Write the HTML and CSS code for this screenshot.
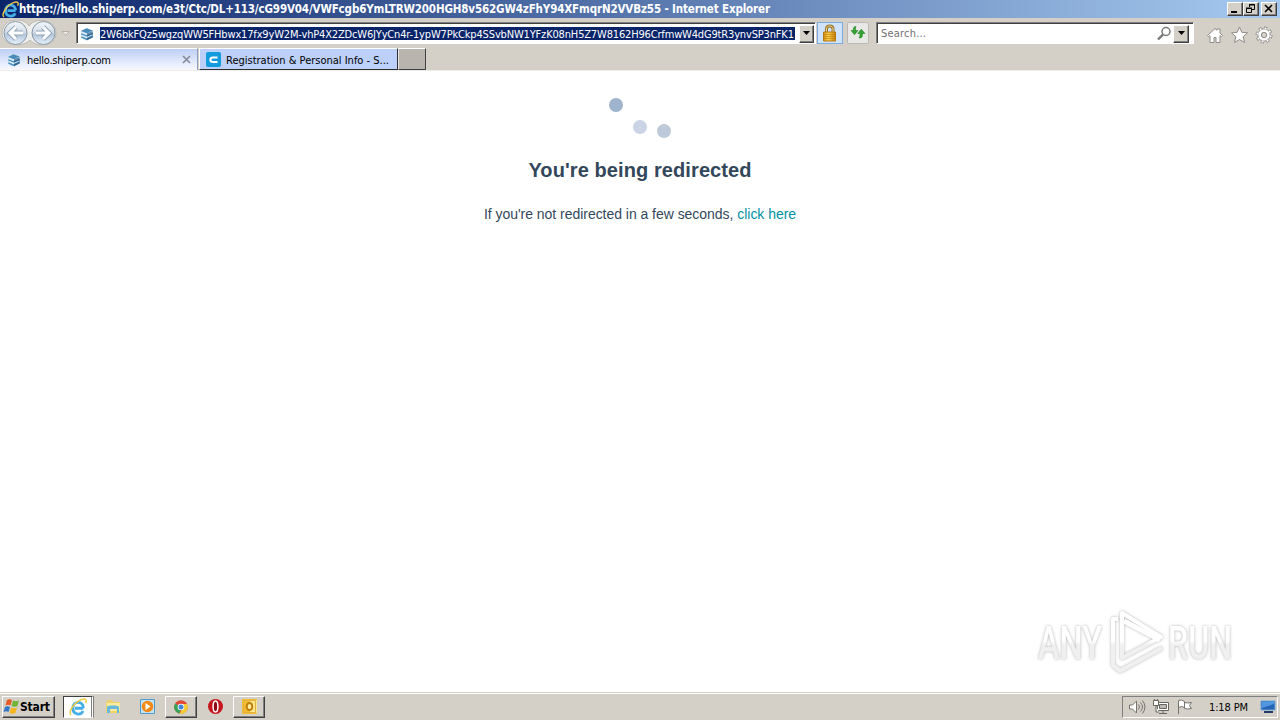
FILE: index.html
```html
<!DOCTYPE html>
<html lang="en">
<head>
<meta charset="utf-8">
<title>hello.shiperp.com - Internet Explorer</title>
<link rel="stylesheet" href="styles.css">
</head>
<body>
<svg width="0" height="0" class="defs">
  <defs>
    <linearGradient id="orb" x1="0" y1="0" x2="0" y2="1"><stop offset="0" stop-color="#f4f7fa"/><stop offset=".48" stop-color="#d3dde8"/><stop offset=".55" stop-color="#b3c6da"/><stop offset="1" stop-color="#e6f2fa"/></linearGradient>
    <linearGradient id="gold" x1="0" y1="0" x2="1" y2="0"><stop offset="0" stop-color="#d48c10"/><stop offset=".4" stop-color="#fad24c"/><stop offset="1" stop-color="#cc8208"/></linearGradient>
    <linearGradient id="mark" gradientUnits="userSpaceOnUse" x1="0" y1="10" x2="0" y2="70"><stop offset=".5" stop-color="#fff"/><stop offset=".56" stop-color="#ececec"/></linearGradient>
    <symbol id="ie" viewBox="0 0 16 16">
      <path d="M12.8 9.1H5.2M12.7 8.8C12.8 2.3 3.5 2.2 3.4 9c-.1 6 7.2 6.9 9 2.6" fill="none" stroke="#45aee6" stroke-width="2.5"/>
      <path d="M2 15C-1.5 13.200 4.500 3.500 11.500 1.300c3.500-1.100 4.500.600 3.200 3.200" fill="none" stroke="#f1cb42" stroke-width="1.300"/>
    </symbol>
    <symbol id="stack" viewBox="0 0 16 16">
      <path d="M1 4.500 8 1l7 3-.5 8L7 15.500l-6-3z" fill="#d5e9f5"/>
      <path d="m1 4.500 6.500-3 7 2.600L8 7zM1.500 7l6 2.400L14.500 6.500v2L7.800 11.500 1.500 9zM1.500 10.500 8 13l6.500-3v1.800L8 15l-6.500-2.800z" fill="#4a8cb8"/>
      <path d="M8 7v8l6.500-3V4.500z" fill="#174f7f" opacity=".6"/><path d="m2 9.400 6 2.300 5.500-2.500" stroke="#d9f0ff" fill="none"/>
    </symbol>
  </defs>
</svg>
<div class="screen">
  <header class="titlebar">
    <svg class="title-icon" width="17" height="17"><use href="#ie"/></svg>
    <svg class="title-text" width="760" height="18"><text x="0" y="13" textLength="751">https://hello.shiperp.com/e3t/Ctc/DL+113/cG99V04/VWFcgb6YmLTRW200HGH8v562GW4zFhY94XFmqrN2VVBz55 - Internet Explorer</text></svg>
    <div class="window-buttons">
      <button class="wbtn"><svg width="14" height="12"><path d="M3 8h6v2H3z"/></svg></button>
      <button class="wbtn"><svg width="14" height="12"><path d="M5.500 4V1.500h5v5H8M5 2h6M2.500 5.500h5v4h-5zM2 5h6" fill="none" stroke="#000"/></svg></button>
      <button class="wbtn close"><svg width="14" height="12"><path d="m3 2 7 7m0-7-7 7" stroke="#000" stroke-width="1.600"/></svg></button>
    </div>
  </header>

  <nav class="navbar">
    <svg class="arrows" width="74" height="29" viewBox="0 0 74 29">
      <path d="M2 15C3-1 24-1 29 8c7-10 27-6 27 7 0 14-19 15-26 7C21 31 2 27 2 15z" fill="#eeeeed" stroke="#bdbab5"/>
      <g fill="url(#orb)" stroke="#8997a6"><circle cx="15.500" cy="15" r="11.500"/><circle cx="43.500" cy="15" r="11.500"/></g>
      <g fill="none" stroke="#8fa2b7" stroke-width="5"><path d="M23 15H11m5-6-6 6 6 6M36 15h12m-5-6 6 6-6 6"/></g>
      <g fill="none" stroke="#fff" stroke-width="3"><path d="M23 15H11m5-6-6 6 6 6M36 15h12m-5-6 6 6-6 6"/></g>
      <path d="M61.500 13.500h8l-4 4z" fill="#e7e4df" stroke="#b8b2aa"/>
    </svg>
    <div class="field address">
      <svg class="site-icon" width="14" height="14"><use href="#stack"/></svg>
      <svg class="url" width="695" height="13"><text x="0" y="11" textLength="694">2W6bkFQz5wgzqWW5FHbwx17fx9yW2M-vhP4X2ZDcW6JYyCn4r-1ypW7PkCkp4SSvbNW1YFzK08nH5Z7W8162H96CrfmwW4dG9tR3ynvSP3nFK1</text></svg>
      <button class="drop"><svg width="9" height="5"><path d="M1 0h7L4.500 4z"/></svg></button>
    </div>
    <div class="tool lock"><svg width="16" height="18" viewBox="0 0 16 18"><path d="M4.500 9V5c0-4 6.500-4 6.500 0v4" fill="none" stroke="#98752c" stroke-width="3"/><path d="M4.500 9V5c0-4 6.500-4 6.500 0v4" fill="none" stroke="#f0d789"/><path d="M1.500 8h12v9h-12z" fill="url(#gold)" stroke="#b67912"/><path d="M2 10.500h11m-11 2h11m-11 2h11" stroke="#bd7908" opacity=".6"/></svg></div>
    <div class="tool refresh"><svg width="18" height="16" viewBox="0 0 18 16"><path d="M7 1.500C4.500 1.500 4.300 3 4.300 5.500H2l3.500 4.300L9 5.500H6.500c0-2 0-3 .5-4zM10 13c3.500 0 3.500-1.500 3.500-4.500H16l-3.700-4.300-3.700 4.300H11c0 2 0 3-1 4.500z" fill="#30a331" stroke="#17781d" stroke-width=".5"/></svg></div>
    <div class="field search">
      <span class="placeholder">Search...</span>
      <svg width="15" height="15"><circle cx="9" cy="5.500" r="4" fill="none" stroke="#777" stroke-width="1.500"/><path d="m6 8.500-5 5" stroke="#777" stroke-width="2.400"/></svg>
      <button class="drop"><svg width="9" height="5"><path d="M1 0h7L4.500 4z"/></svg></button>
    </div>
    <svg class="commands" width="66" height="18" viewBox="0 0 66 18" fill="#fff" stroke="#8f8b87" stroke-linejoin="round">
      <path d="m.5 9.500 7.500-7 2 1.800V3h3v4l2.500 2.500-1 1-1.500-.8v6.800H9V11.500H7v5H3V9.700l-1.500.8z"/>
      <path d="m32.500 1 2.300 5.300 5.700.500-4.300 3.900 1.300 5.800-5-3-5 3 1.300-5.800-4.300-3.900 5.700-.500z"/>
      <circle cx="57" cy="9" r="6.700" fill="none" stroke-width="3.600" stroke-dasharray="2.800 2.460"/>
      <circle cx="57" cy="9" r="6.200"/>
      <circle cx="57" cy="9" r="6.700" fill="none" stroke="#fff" stroke-width="1.800" stroke-dasharray="1.800 3.460" stroke-dashoffset="-.5"/>
      <circle cx="57" cy="9" r="2.700" fill="#d4d0c8"/>
    </svg>
  </nav>

  <div class="tabs">
    <div class="tab active"><svg class="site-icon" width="14" height="14"><use href="#stack"/></svg><svg class="tab-title" width="158" height="18"><text x="0" y="13" textLength="84">hello.shiperp.com</text></svg><svg width="9" height="9"><path d="m1 1 7 7m0-7L1 8" stroke="#858b99" stroke-width="1.700"/></svg></div>
    <div class="tab other"><svg width="16" height="16"><rect width="15" height="15" rx="2" fill="#129bdd"/><path d="M11.500 5.500H7c-3.500 0-3.500 4.500 0 4.500h4.500" fill="none" stroke="#fff" stroke-width="2"/></svg><svg class="tab-title" width="166" height="18"><text x="0" y="13" textLength="163">Registration &amp; Personal Info - S...</text></svg></div>
    <div class="tab new"></div>
  </div>

  <main class="page">
    <svg class="spinner" width="64" height="44"><circle cx="8" cy="8" r="7" fill="#9eb3cc"/><circle cx="32" cy="30" r="7" fill="#cad4e4"/><circle cx="56" cy="34" r="7" fill="#bccad9"/></svg>
    <h1>You're being redirected</h1>
    <p>If you're not redirected in a few seconds, <a>click here</a></p>
    <svg class="watermark" width="220" height="84" viewBox="0 0 220 84">
      <text x="8" y="58" textLength="64" lengthAdjust="spacingAndGlyphs">ANY</text>
      <g fill="none" stroke="url(#mark)" stroke-width="4" stroke-linejoin="round"><path d="M92 12v45l39-21zM88 18h-5v46l7 6 42-23"/><path d="M94 20l36 19" stroke-width="5"/></g>
      <text x="138" y="58" textLength="64" lengthAdjust="spacingAndGlyphs">RUN</text>
    </svg>
  </main>

  <footer class="taskbar">
    <button class="start"><svg width="17" height="17" viewBox="0 0 17 17"><path d="M4 2c2-1 3-1 5 0L7.500 7.500c-2-1-3-1-5 0z" fill="#e65b22"/><path d="M10 2.500c2 1 4 1 6 0L14.500 8c-2 1-4 1-6 0z" fill="#72b536"/><path d="M2 9c2-1 3-1 5 0l-1.500 5c-2-1-3-1-5 0z" fill="#3477c8"/><path d="M8 9.500c2 1 4 1 6 0L12.500 15c-2 1-4 1-6 0z" fill="#f4b51e"/></svg><svg width="31" height="16"><text x="0" y="12" textLength="30">Start</text></svg></button>
    <div class="task current"><svg width="18" height="18"><use href="#ie"/></svg></div>
    <div class="task folder"><svg width="17" height="17"><path d="M1 4 3 2h4l2 2h6v11H1z" fill="#eed26b"/><path d="M2 5h13v8H2z" fill="#f9e89d"/><path d="M2 15V9c0-2 12-2 12 0v6h-2v-4H5v4z" fill="#65b9dc"/></svg></div>
    <div class="task player"><svg width="17" height="17"><path d="M1.500 1.500h14v14h-14z" fill="#c3e3f7" stroke="#529acd"/><circle cx="8.500" cy="8.500" r="5.800" fill="#f48a16"/><path d="m6.500 5 5 3.500-5 3.500z" fill="#fff"/></svg></div>
    <div class="task raised"><svg width="16" height="16"><circle cx="8" cy="8" r="6.800" fill="#e34736"/><path d="M2.100 4.600 8 8l-1.500 6.700A6.800 6.800 0 0 1 2.100 4.600z" fill="#36a35b"/><path d="M8 5h6.100A6.800 6.800 0 0 1 6.500 14.700L10 8z" fill="#f4cd39"/><circle cx="8" cy="8" r="3.300" fill="#fff"/><circle cx="8" cy="8" r="2.500" fill="#4486d8"/></svg></div>
    <div class="task opera"><svg width="17" height="17"><circle cx="8.500" cy="8.500" r="7.500" fill="#c4161c"/><ellipse cx="8.500" cy="8.500" rx="2.400" ry="5.500" fill="#8f0d12" stroke="#fff" stroke-width="1.500"/></svg></div>
    <div class="task raised"><svg width="17" height="17"><path d="M1 1h15v15H1z" fill="#f2bd31"/><path d="M9 2h7v13H9z" fill="#fce68c"/><path d="M2.500 2.500h12v12h-12z" fill="none" stroke="#e0b040"/><ellipse cx="8.500" cy="8.500" rx="2.800" ry="3.600" fill="#fff0a0" stroke="#c08010" stroke-width="2"/></svg></div>
    <div class="tray">
      <svg width="18" height="16" fill="none" stroke="#77736e"><path d="M1.500 6v4h3l4 4V2l-4 4z" fill="#fff"/><path d="M10.500 5.500q2 2.500 0 5m2-7q4 4.500 0 9m2-11q5 6.500 0 13"/></svg>
      <svg width="18" height="16" fill="#fff" stroke="#69655f"><path d="M5.500 3.500h11v8h-11z"/><path d="M7.500 5.500h7v4h-7z" fill="#bdbab5"/><path d="M11 12v2m-4 .5h8M1.500 1.500h5v5h-5zM2.500 0v2m3-2v2M4 7v6h3"/></svg>
      <svg width="18" height="16" fill="#fff" stroke="#77736e"><path d="M2.500 15V1.500q3-1.500 6 1v6q-3-2-6 0M8.500 3.500q3 1 7 0l-2 3 2 3q-4 1-7 0z"/></svg>
      <svg class="clock" width="41" height="16"><text x="0" y="12" textLength="39">1:18 PM</text></svg>
      <svg class="desktop" width="17" height="15"><path d="M1 2h14v9H1z" fill="#2464b4" stroke="#73a7da"/><path d="m2 3 12-1v3L2 9z" fill="#5097df"/><path d="M4 13h9" stroke="#253c66" stroke-width="2"/></svg>
    </div>
  </footer>
</div>
</body>
</html>
```
FILE: styles.css
```css
* { box-sizing: border-box; }
body { margin: 0; overflow: hidden; font: 11px "DejaVu Sans Condensed", "DejaVu Sans", sans-serif; color: #000; }
svg { display: block; flex: none; }
.defs { position: absolute; }
button { padding: 0; margin: 0; font: inherit; border-radius: 0; }
.screen { width: 1280px; height: 720px; display: flex; flex-direction: column; background: #d4d0c8; }
.titlebar { height: 18px; flex: none; display: flex; align-items: center; padding: 0 3px 0 2px; background: linear-gradient(90deg, #0a246a, #a6caf0); }
.title-text { font-family: "DejaVu Sans Condensed", sans-serif; font-weight: bold; fill: #fff; font-size: 11.5px; }
.window-buttons { display: flex; margin-left: auto; }
.wbtn, .drop, .raised, .start { background: #d4d0c8; border: 1px solid; border-color: #fff #404040 #404040 #fff; box-shadow: inset -1px -1px #808080; }
.wbtn { width: 16px; height: 14px; }
.wbtn.close { margin-left: 2px; }
.navbar { height: 29px; flex: none; display: flex; align-items: flex-start; }
.arrows { margin-right: 2px; }
.field { background: #fff; height: 22px; margin-top: 4px; border: 1px solid; border-color: #808080 #fff #fff #808080; box-shadow: inset 1px 1px #404040; display: flex; align-items: center; }
.address { width: 740px; padding: 1px 1px 0 3px; }
.url { background: #0a246a; fill: #fff; font-family: "DejaVu Sans Condensed", sans-serif; font-size: 11px; margin: 0 4px 0 6px; }
.drop { width: 16px; height: 18px; display: flex; align-items: center; justify-content: center; }
.tool { height: 22px; margin-top: 4px; display: flex; align-items: center; justify-content: center; }
.lock { width: 26px; background: #cfe3fb; border: 1px solid #7eacdf; margin-left: 1px; }
.refresh { width: 22px; background: #e8e8e6; border: 1px solid #bcb9b4; border-radius: 2px; margin: 4px 7px 0 4px; }
.search { width: 318px; padding: 1px 4px 0 4px; }
.search .drop { margin-left: 1px; width: 16px; }
.placeholder { color: #707070; flex: 1; font-size: 11px; letter-spacing: .2px; }
.commands { margin: 8px 0 0 13px; }
.tabs { height: 24px; flex: none; display: flex; padding-top: 1px; border-bottom: 1px solid #eeedeb; }
.tab { height: 22px; display: flex; align-items: center; }
.tab text { font-size: 11px; }
.active { width: 198px; padding-left: 7px; background: linear-gradient(#bdcff7, #eaf0fc 75%, #f5f7fc); border-top: 1px solid #fff; border-right: 1px solid #8e9cc0; }
.active .tab-title { margin-left: 6px; margin-right: -3px; }
.other { width: 199px; padding: 1px 0 0 6px; background: #bcd0fa; border: 1px solid #fff; border-width: 1px 0 0 1px; border-right: 1px solid #303030; border-bottom: 1px solid #303030; margin-left: 1px; }
.other .tab-title { margin-left: 4px; }
.new { width: 28px; background: #b9b4ad; border: 1px solid #404040; border-top-color: #fff; border-left-color: #e5e5e5; }
.page { position: relative; height: 621px; flex: none; background: #fff; color: #33475b; display: flex; flex-direction: column; align-items: center; padding-top: 26px; font-family: "Liberation Sans", Arial, sans-serif; }
.page h1 { margin: 17px 0 0; font-size: 20px; line-height: 24px; letter-spacing: .09px; }
.page p { margin: 22px 0 0; font-size: 14px; line-height: 20px; letter-spacing: -.035px; }
.page a { color: #0091a0; }
.watermark { position: absolute; left: 1030px; top: 530px; fill: url(#mark); filter: drop-shadow(0 0 1.5px #999); font: 500 46px Roboto, sans-serif; opacity: .75; }
.taskbar { height: 28px; flex: none; display: flex; align-items: center; padding: 2px; border-top: 1px solid #d4d0c8; box-shadow: inset 0 1px #fff; }
.start { width: 53px; height: 22px; display: flex; align-items: center; font: bold 12px "DejaVu Sans Condensed", sans-serif; }
.task { height: 22px; width: 33px; display: flex; align-items: center; justify-content: center; }
.current { width: 31px; margin: 0 3px 0 8px; background: #fff; border: 1px solid; border-color: #404040 #fff #fff #404040; border-right: 3px double #808080; }
.player { width: 35px; }
.raised { width: 32px; }
.opera { width: 36px; }
.tray { margin-left: auto; height: 22px; width: 156px; padding-left: 5px; border: 1px solid; border-color: #808080 #fff #fff #808080; display: flex; align-items: center; gap: 6px; }
.clock { margin-left: 9px; font-size: 11px; }
.desktop { margin-left: 4px; }
```
